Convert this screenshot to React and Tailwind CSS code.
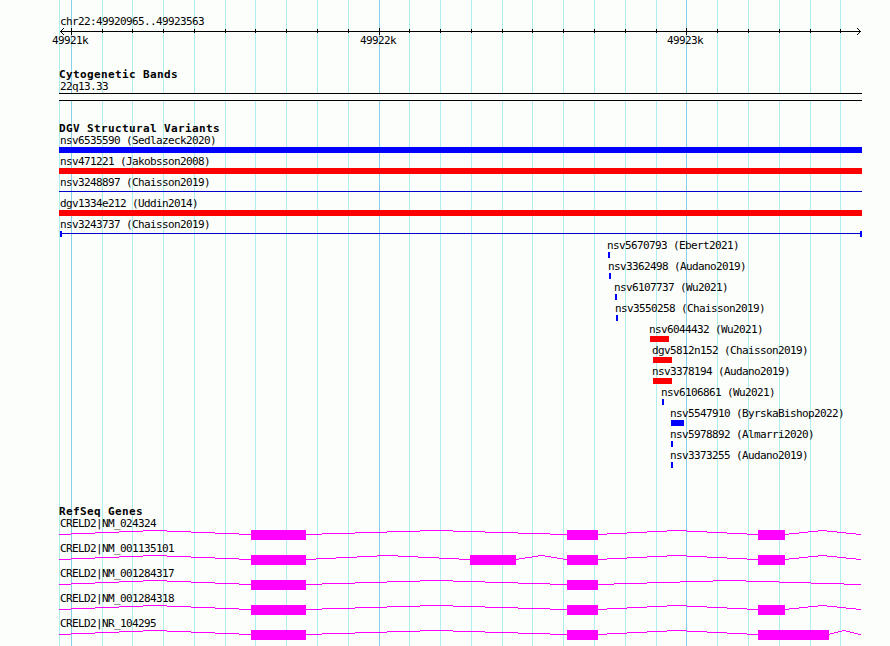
import React from "react";

const MINOR = [59, 102, 132, 163, 194, 225, 255, 286, 317, 348, 409, 440, 471, 502, 532, 563, 594, 625, 656, 717, 748, 779, 810, 840];
const MAJOR = [71, 379, 686];

const VARIANTS = [
  { name: "nsv6535590 (Sedlazeck2020)", x: 59, w: 803, kind: "blue" },
  { name: "nsv471221 (Jakobsson2008)", x: 59, w: 803, kind: "red" },
  { name: "nsv3248897 (Chaisson2019)", x: 59, w: 803, kind: "line" },
  { name: "dgv1334e212 (Uddin2014)", x: 59, w: 803, kind: "red" },
  { name: "nsv3243737 (Chaisson2019)", x: 59, w: 803, kind: "span" },
  { name: "nsv5670793 (Ebert2021)", x: 608, w: 2, kind: "blue" },
  { name: "nsv3362498 (Audano2019)", x: 609, w: 2, kind: "blue" },
  { name: "nsv6107737 (Wu2021)", x: 615, w: 2, kind: "blue" },
  { name: "nsv3550258 (Chaisson2019)", x: 616, w: 2, kind: "blue" },
  { name: "nsv6044432 (Wu2021)", x: 650, w: 19, kind: "red" },
  { name: "dgv5812n152 (Chaisson2019)", x: 653, w: 19, kind: "red" },
  { name: "nsv3378194 (Audano2019)", x: 653, w: 19, kind: "red" },
  { name: "nsv6106861 (Wu2021)", x: 662, w: 2, kind: "blue" },
  { name: "nsv5547910 (ByrskaBishop2022)", x: 671, w: 13, kind: "blue" },
  { name: "nsv5978892 (Almarri2020)", x: 671, w: 2, kind: "blue" },
  { name: "nsv3373255 (Audano2019)", x: 671, w: 2, kind: "blue" },
];

// Each intron lists the x positions at which its line moves up or down one pixel.
const I1 = [59, 71, 95, 119, 143, 167, 191, 215, 239, 251];
const I2 = [306, 322, 355, 387, 420, 453, 485, 518, 550, 567];
const I2A = [306, 316, 336, 357, 377, 398, 418, 439, 459, 470];
const I2B = [516, 519, 525, 532, 538, 545, 551, 557, 563, 567];
const I3 = [598, 607, 627, 647, 667, 687, 707, 727, 747, 758];
const I3L = [598, 614, 647, 680, 713, 746, 779, 811, 844, 861];
const I4 = [785, 789, 799, 808, 818, 827, 837, 846, 856, 861];
const I4S = [829, 830, 834, 838, 842, 846, 850, 854, 858, 861];
const LEVELS = [4, 3, 2, 1, 0, 1, 2, 3, 4];

const GENES = [
  { name: "CRELD2|NM_024324", exons: [[251, 306], [567, 598], [758, 785]], introns: [I1, I2, I3, I4] },
  { name: "CRELD2|NM_001135101", exons: [[251, 306], [470, 516], [567, 598], [758, 785]], introns: [I1, I2A, I2B, I3, I4] },
  { name: "CRELD2|NM_001284317", exons: [[251, 306], [567, 598]], introns: [I1, I2, I3L] },
  { name: "CRELD2|NM_001284318", exons: [[251, 306], [567, 598], [758, 785]], introns: [I1, I2, I3, I4] },
  { name: "CRELD2|NR_104295", exons: [[251, 306], [567, 598], [758, 829]], introns: [I1, I2, I3, I4S] },
];

function Gridlines() {
  return (
    <svg className="absolute inset-0" width="890" height="646" shapeRendering="crispEdges">
      {MINOR.map((x) => <rect key={x} x={x} y="0" width="1" height="646" fill="#afeeee" />)}
      {MAJOR.map((x) => <rect key={x} x={x} y="0" width="1" height="646" fill="#87ceeb" />)}
    </svg>
  );
}

function Ruler() {
  return (
    <svg className="block overflow-visible" width="890" height="6" shapeRendering="crispEdges">
      <rect x="60" y="3" width="801" height="1" />
      {MINOR.slice(1).map((x) => <rect key={x} x={x} y="1" width="1" height="4" />)}
      {MAJOR.map((x) => <rect key={x} x={x} y="0" width="1" height="7" />)}
      {[0, 1, 2, 3].map((d) => (
        <g key={d}>
          <rect x={60 + d} y={3 - d} width="1" height="1" />
          <rect x={60 + d} y={3 + d} width="1" height="1" />
          <rect x={860 - d} y={3 - d} width="1" height="1" />
          <rect x={860 - d} y={3 + d} width="1" height="1" />
        </g>
      ))}
    </svg>
  );
}

function Heading({ children }) {
  return <h2 className="ml-[59px] h-3 text-[11px] leading-[13px] font-bold tracking-[0.38px]">{children}</h2>;
}

function Glyph({ kind }) {
  if (kind === "line") return <div className="mt-[2px] h-px w-full bg-[#0000c8]" />;
  if (kind === "span") {
    return (
      <div className="flex h-full w-full pl-px">
        <div className="w-[2px] bg-[#0000ff]" />
        <div className="mt-[2px] h-px flex-1 bg-[#0000c8]" />
        <div className="w-[2px] bg-[#0000ff]" />
      </div>
    );
  }
  return <div className={kind === "red" ? "h-full w-full bg-[#ff0000]" : "h-full w-full bg-[#0000ff]"} />;
}

function Variant({ v }) {
  return (
    <div className="h-[21px]" style={{ marginLeft: v.x }}>
      <div className="h-[13px] pl-px" style={{ marginLeft: v.x === 59 ? 0 : -2 }}>{v.name}</div>
      <div className="h-[6px]" style={{ width: v.w }}><Glyph kind={v.kind} /></div>
    </div>
  );
}

function Gene({ gene }) {
  return (
    <div className="h-[25px]">
      <div className="ml-[60px] h-[13px]">{gene.name}</div>
      <svg className="block" width="890" height="10" fill="#ff00ff" shapeRendering="crispEdges">
        {gene.introns.map((xs) =>
          LEVELS.map((y, i) => <rect key={`${xs[0]}-${i}`} x={xs[i]} y={y} width={xs[i + 1] - xs[i]} height="1" />)
        )}
        {gene.exons.map(([a, b]) => <rect key={a} x={a} y="0" width={b - a} height="10" />)}
      </svg>
    </div>
  );
}

export default function App() {
  return (
    <div className="relative h-[646px] w-[890px] overflow-hidden bg-[#fcfefc] font-['DejaVu_Sans_Mono','Liberation_Mono',monospace] text-[11px] leading-[13px] tracking-[-0.622px] whitespace-nowrap text-black">
      <Gridlines />
      <main className="relative pt-[15px]">
        <section>
          <div className="ml-[60px] h-[13px]">chr22:49920965..49923563</div>
          <Ruler />
          <div className="flex h-[13px] pl-[52px]">
            <span className="w-[308px]">49921k</span>
            <span className="w-[307px]">49922k</span>
            <span>49923k</span>
          </div>
        </section>
        <section className="mt-[21px]">
          <Heading>Cytogenetic Bands</Heading>
          <div className="ml-[60px] h-[13px]">22q13.33</div>
          <div className="ml-[59px] h-2 w-[803px] border-y border-black bg-[#fcfefc]" />
        </section>
        <section className="mt-[21px]">
          <Heading>DGV Structural Variants</Heading>
          {VARIANTS.map((v) => <Variant key={v.name} v={v} />)}
        </section>
        <section className="mt-[35px]">
          <Heading>RefSeq Genes</Heading>
          {GENES.map((g) => <Gene key={g.name} gene={g} />)}
        </section>
      </main>
    </div>
  );
}
